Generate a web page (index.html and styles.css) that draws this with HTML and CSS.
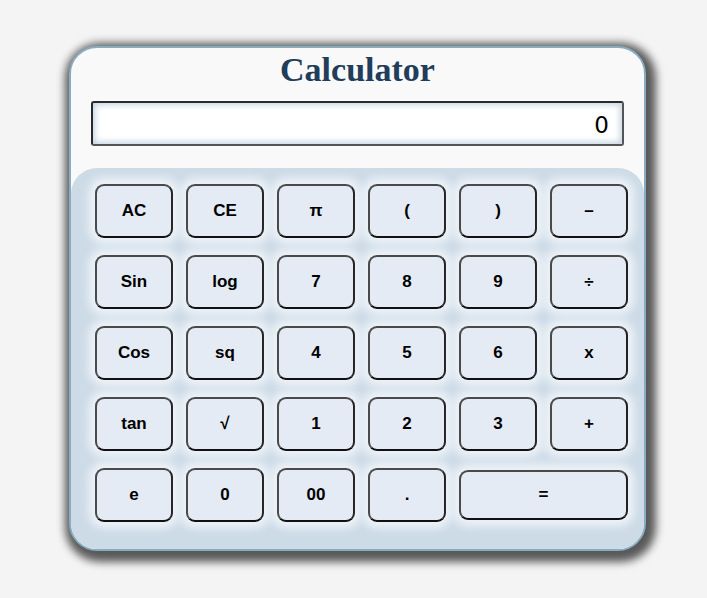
FILE: index.html
```html
<!DOCTYPE html>
<html>
<head>
<meta charset="utf-8">
<link rel="stylesheet" href="styles.css">
</head>
<body>
<div class="calc">
  <h1 class="title">Calculator</h1>
  <div class="display">0</div>
  <div class="keypad">
    <button class="key">AC</button>
    <button class="key">CE</button>
    <button class="key">π</button>
    <button class="key">(</button>
    <button class="key">)</button>
    <button class="key">–</button>
    <button class="key">Sin</button>
    <button class="key">log</button>
    <button class="key">7</button>
    <button class="key">8</button>
    <button class="key">9</button>
    <button class="key">÷</button>
    <button class="key">Cos</button>
    <button class="key">sq</button>
    <button class="key">4</button>
    <button class="key">5</button>
    <button class="key">6</button>
    <button class="key">x</button>
    <button class="key">tan</button>
    <button class="key">√</button>
    <button class="key">1</button>
    <button class="key">2</button>
    <button class="key">3</button>
    <button class="key">+</button>
    <button class="key">e</button>
    <button class="key">0</button>
    <button class="key">00</button>
    <button class="key">.</button>
    <button class="key equals">=</button>
  </div>
</div>
</body>
</html>
```

FILE: styles.css
```css
html, body {
  margin: 0;
  padding: 0;
  background: #f4f4f4;
  min-height: 100%;
}
html {
  height: 100%;
}
body {
  box-sizing: border-box;
  height: 100%;
  padding-top: 46px;
  padding-left: 69px;
}
.calc {
  width: 573px;
  height: 501px;
  background: #f9f9fa;
  border: 2px solid #88acc2;
  border-radius: 28px;
  box-shadow: 3px 4px 9px 7px #595959;
  display: flex;
  flex-direction: column;
  overflow: hidden;
}
.title {
  margin: 0;
  padding-top: 2px;
  font-family: "Liberation Serif", "Times New Roman", serif;
  font-weight: bold;
  font-size: 34px;
  line-height: 40px;
  text-align: center;
  color: #213d5a;
}
.display {
  margin: 11px 20px 0 20px;
  height: 41px;
  border: 2px solid #2a2a2a;
  border-bottom-color: #555;
  border-right-color: #555;
  border-radius: 3px;
  background: #ffffff;
  box-shadow: inset 0 0 6px 2px #c5d3e0;
  font-family: "DejaVu Sans", sans-serif;
  font-size: 23px;
  line-height: 44px;
  text-align: right;
  padding-right: 13px;
  color: #000;
}
.keypad {
  margin-top: 22px;
  flex: 1;
  background: #cddbe7;
  border-radius: 26px 26px 0 0;
  padding: 16px 16px 25px 24px;
  display: grid;
  grid-template-columns: repeat(6, 78px);
  grid-template-rows: repeat(5, 54px);
  column-gap: 13px;
  row-gap: 17px;
}
.key {
  margin: 0;
  padding: 0;
  background: #e4ebf4;
  border: 2px solid #4a4a4a;
  border-bottom-color: #111;
  border-right-color: #222;
  border-radius: 9px;
  box-shadow: 0 0 9px 6px #eef3f8;
  font-family: "Liberation Sans", Arial, sans-serif;
  font-weight: bold;
  font-size: 17px;
  color: #000;
}
.equals {
  grid-column: span 2;
  height: 50px;
  align-self: center;
}
```
